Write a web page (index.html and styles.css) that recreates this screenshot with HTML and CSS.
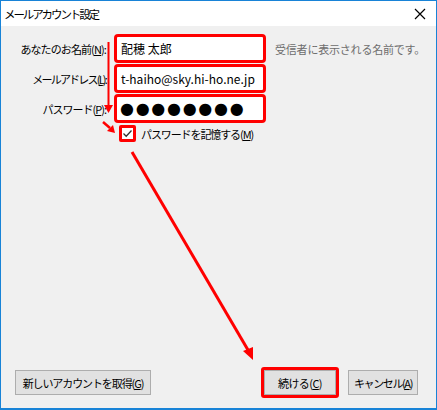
FILE: index.html
```html
<!DOCTYPE html>
<html lang="ja">
  <head>
    <meta charset="UTF-8" />
    <title>メールアカウント設定</title>
    <link rel="stylesheet" href="styles.css">
  </head>
  <body>
    <div class="window">
      <div class="titlebar">
        <span class="title">メールアカウント設定</span>
        <svg class="close" width="12" height="12" viewBox="0 0 12 12">
          <path d="M1 1 L11 11 M11 1 L1 11" stroke="#000" stroke-width="1.2" fill="none" />
        </svg>
      </div>
      <div class="content">
        <div class="fields">
          <label class="label">あなたのお名前(<u>N</u>):</label>
          <div class="mark"><div class="field">配穂 太郎</div></div>
          <span class="hint">受信者に表示される名前です。</span>

          <label class="label kana">メールアドレス(<u>L</u>):</label>
          <div class="mark"><div class="field">t-haiho@sky.hi-ho.ne.jp</div></div>
          <span></span>

          <label class="label kana-short">パスワード(<u>P</u>):</label>
          <div class="mark"><div class="field dots">●●●●●●●●</div></div>
          <span></span>
        </div>

        <div class="remember">
          <div class="check-mark">
            <div class="checkbox">
              <svg width="11" height="11" viewBox="0 0 11 11">
                <path d="M1.5 5.5 L4.2 8.2 L9.5 2.5" stroke="#333" stroke-width="1.3" fill="none" />
              </svg>
            </div>
          </div>
          <span>パスワードを記憶する(<u>M</u>)</span>
        </div>

        <div class="buttons">
          <button class="btn new">新しいアカウントを取得(<u>G</u>)</button>
          <div class="right">
            <div class="btn-mark"><button class="btn next">続ける(<u>C</u>)</button></div>
            <button class="btn cancel">キャンセル(<u>A</u>)</button>
          </div>
        </div>

        <svg class="arrows" width="437" height="410" viewBox="0 0 437 410">
          <g stroke="#ff0000" fill="#ff0000">
            <line x1="108.5" y1="42" x2="108.5" y2="106" stroke-width="2" />
            <polygon points="104,105 113,105 108.5,113" stroke="none" />
            <line x1="103" y1="122" x2="110" y2="128" stroke-width="2.5" />
            <polygon points="107,131 115,133 113,125" stroke="none" />
            <line x1="132" y1="152" x2="248" y2="350" stroke-width="3" />
            <polygon points="243,351 253,347 253,360" stroke="none" />
          </g>
        </svg>
      </div>
    </div>
  </body>
</html>
```

FILE: styles.css
```css
body {
  margin: 0;
  font-family: "Noto Sans CJK JP", sans-serif;
  font-size: 11px;
  letter-spacing: -1.1px;
  color: #000;
}

u {
  text-decoration: underline;
  text-underline-offset: 1px;
}

.window {
  width: 437px;
  height: 410px;
  box-sizing: border-box;
  border: 1px solid #1883d7;
  border-bottom-width: 2px;
  display: flex;
  flex-direction: column;
}

.titlebar {
  height: 25px;
  background-color: #fff;
  display: flex;
  align-items: center;
  justify-content: space-between;
  padding: 0 10px 0 3px;
}

.title {
  font-size: 11.5px;
  letter-spacing: -2.1px;
}

.content {
  flex: 1;
  position: relative;
  background-color: #f0f0f0;
  padding: 8px 10px 10px 10px;
  display: flex;
  flex-direction: column;
}

.fields {
  display: grid;
  grid-template-columns: 97px 152px 1fr;
  column-gap: 6px;
  row-gap: 1px;
  align-items: center;
}

.label {
  justify-self: end;
  padding-right: 2px;
  white-space: nowrap;
  letter-spacing: -0.9px;
}

.label.kana {
  letter-spacing: -1.8px;
}

.label.kana-short {
  letter-spacing: -1px;
}

.hint {
  color: #6d6d6d;
  margin-left: 3px;
  letter-spacing: -0.2px;
  white-space: nowrap;
}

.mark {
  height: 29px;
  box-sizing: border-box;
  border: 3px solid #ff0000;
  border-radius: 4px;
  background-color: #fff;
}

.field {
  height: 100%;
  display: flex;
  align-items: center;
  padding-left: 4px;
  font-size: 12px;
  letter-spacing: 0;
  white-space: nowrap;
  overflow: hidden;
}

.dots {
  font-family: "DejaVu Sans", sans-serif;
  font-size: 16px;
  letter-spacing: 1.7px;
  padding-left: 3px;
}

.remember {
  display: flex;
  align-items: center;
  margin: 2px 0 0 108px;
}

.check-mark {
  width: 17px;
  height: 17px;
  box-sizing: border-box;
  border: 3px solid #ff0000;
  border-radius: 2px;
  display: flex;
  align-items: center;
  justify-content: center;
  margin-right: 5px;
}

.checkbox {
  width: 11px;
  height: 11px;
  background-color: #fff;
  display: flex;
}

.buttons {
  margin-top: auto;
  display: flex;
  align-items: center;
  padding-left: 4px;
}

.right {
  margin-left: auto;
  display: flex;
  align-items: center;
  gap: 9px;
  margin-right: 8px;
}

.btn {
  height: 25px;
  box-sizing: border-box;
  background-color: #e1e1e1;
  border: 1px solid #adadad;
  font-family: inherit;
  font-size: 11px;
  letter-spacing: -1.1px;
  color: #000;
  padding: 0;
  white-space: nowrap;
}

.new {
  width: 136px;
}

.next {
  width: 72px;
  letter-spacing: -0.6px;
}

.cancel {
  width: 70px;
  letter-spacing: -1.4px;
}

.btn-mark {
  border: 3px solid #ff0000;
  border-radius: 3px;
  display: flex;
}

.arrows {
  position: absolute;
  left: -1px;
  top: -26px;
  pointer-events: none;
}
```
